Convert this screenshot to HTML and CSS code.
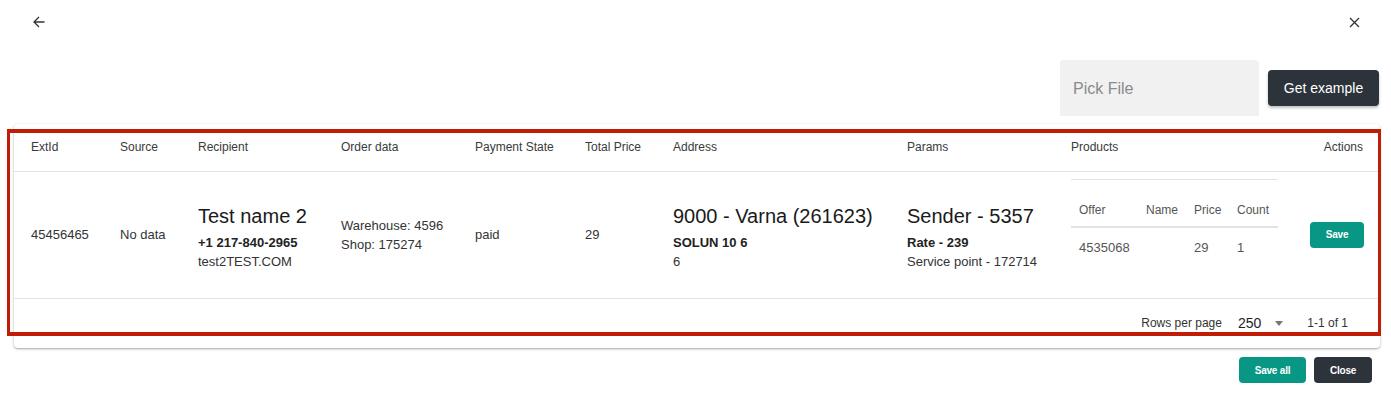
FILE: index.html
```html
<!DOCTYPE html>
<html>
<head>
<meta charset="utf-8">
<link rel="stylesheet" href="styles.css">
</head>
<body>
<div class="page">
  <div class="topbar">
    <button class="icon-btn" aria-label="Back">
      <svg width="12" height="12" viewBox="0 0 12 12"><path d="M11.5 6H1M6 1L1 6l5 5" fill="none" stroke="#333" stroke-width="1.3"/></svg>
    </button>
    <button class="icon-btn" aria-label="Close">
      <svg width="11" height="11" viewBox="0 0 11 11"><path d="M1 1l9 9M10 1l-9 9" fill="none" stroke="#333" stroke-width="1.3"/></svg>
    </button>
  </div>

  <div class="toolbar">
    <div class="file-input">Pick File</div>
    <button class="btn btn-dark btn-lg">Get example</button>
  </div>

  <div class="card">
    <table class="grid">
      <colgroup>
        <col class="c-ext"><col class="c-src"><col class="c-rec"><col class="c-ord"><col class="c-pay"><col class="c-tot"><col class="c-adr"><col class="c-par"><col class="c-prd"><col class="c-act">
      </colgroup>
      <thead>
        <tr>
          <th class="first">ExtId</th>
          <th>Source</th>
          <th>Recipient</th>
          <th>Order data</th>
          <th>Payment State</th>
          <th>Total Price</th>
          <th>Address</th>
          <th>Params</th>
          <th>Products</th>
          <th class="last">Actions</th>
        </tr>
      </thead>
      <tbody>
        <tr>
          <td class="first">45456465</td>
          <td>No data</td>
          <td class="stack">
            <div class="big">Test name 2</div>
            <div class="strong">+1 217-840-2965</div>
            <div class="line">test2TEST.COM</div>
          </td>
          <td>
            <div class="line">Warehouse: 4596</div>
            <div class="line">Shop: 175274</div>
          </td>
          <td>paid</td>
          <td>29</td>
          <td class="stack">
            <div class="big">9000 - Varna (261623)</div>
            <div class="strong">SOLUN 10 6</div>
            <div class="line">6</div>
          </td>
          <td class="stack">
            <div class="big">Sender - 5357</div>
            <div class="strong">Rate - 239</div>
            <div class="line">Service point - 172714</div>
          </td>
          <td class="products">
            <table class="sub">
              <colgroup><col class="s-off"><col class="s-name"><col class="s-price"><col class="s-cnt"></colgroup>
              <thead>
                <tr><th>Offer</th><th>Name</th><th>Price</th><th>Count</th></tr>
              </thead>
              <tbody>
                <tr><td>4535068</td><td></td><td>29</td><td>1</td></tr>
              </tbody>
            </table>
          </td>
          <td class="last"><button class="btn btn-teal btn-sm">Save</button></td>
        </tr>
      </tbody>
    </table>
    <div class="pagination">
      <span class="rpp">Rows per page</span>
      <span class="select"><span class="val">250</span><span class="caret"></span></span>
      <span class="range">1-1 of 1</span>
    </div>
  </div>

  <div class="footer-actions">
    <button class="btn btn-teal btn-sm">Save all</button>
    <button class="btn btn-dark btn-sm">Close</button>
  </div>

  <div class="highlight"></div>
</div>
</body>
</html>
```

FILE: styles.css
```css
* { box-sizing: border-box; }
html, body { margin: 0; padding: 0; background: #fff; }
body {
  font-family: "Liberation Sans", Arial, Helvetica, sans-serif;
  color: #333;
  width: 1391px;
  height: 411px;
  overflow: hidden;
}
.page { position: relative; height: 411px; }

.topbar {
  height: 44px;
  display: flex;
  align-items: center;
  justify-content: space-between;
  padding: 0 31px 0 33px;
}
.icon-btn {
  border: 0;
  background: none;
  padding: 0;
  display: flex;
  cursor: pointer;
}

.toolbar {
  margin-top: 16px;
  display: flex;
  justify-content: flex-end;
  align-items: center;
  gap: 9px;
  padding-right: 12px;
}
.file-input {
  width: 199px;
  height: 56px;
  background: #f1f1f1;
  border-radius: 4px 4px 0 0;
  padding: 2px 0 0 13px;
  display: flex;
  align-items: center;
  font-size: 16px;
  color: #8a8a8a;
}

.btn {
  border: 0;
  border-radius: 4px;
  color: #fff;
  font-family: inherit;
  cursor: pointer;
  display: inline-flex;
  align-items: center;
  justify-content: center;
}
.btn-dark { background: #2c333a; }
.btn-teal { background: #079784; }
.btn-lg {
  width: 111px;
  height: 36px;
  font-size: 14px;
  box-shadow: 0 2px 3px rgba(0,0,0,0.25);
}
.btn-sm {
  height: 26px;
  font-size: 10px;
  font-weight: bold;
  letter-spacing: -0.2px;
}

.card {
  margin: 8px 11px 0 14px;
  height: 224px;
  background: #fff;
  border-radius: 4px;
  box-shadow: 0 1px 3px rgba(0,0,0,0.28), 0 1px 1px rgba(0,0,0,0.1);
}

.grid {
  width: 100%;
  table-layout: fixed;
  border-collapse: collapse;
}
.c-ext { width: 106px; }
.c-src { width: 78px; }
.c-rec { width: 143px; }
.c-ord { width: 134px; }
.c-pay { width: 110px; }
.c-tot { width: 88px; }
.c-adr { width: 234px; }
.c-par { width: 164px; }
.c-prd { width: 219px; }
.c-act { width: 90px; }

.grid > thead > tr > th {
  height: 47px;
  font-size: 12px;
  font-weight: normal;
  color: #3a3a3a;
  text-align: left;
  padding: 0;
  border-bottom: 1px solid #e3e3e3;
  vertical-align: middle;
}
.grid > tbody > tr > td {
  height: 127px;
  font-size: 13px;
  color: #333;
  padding: 0;
  border-bottom: 1px solid #e3e3e3;
  vertical-align: middle;
}
.grid .first { padding-left: 17px; }
.grid th.last { text-align: right; padding-right: 17px; }
.grid td.last { text-align: right; padding-right: 16px; }

.grid > tbody > tr > td.stack {
  vertical-align: top;
  padding-top: 32px;
}
.big {
  font-size: 20px;
  line-height: 24px;
  color: #1a1a1a;
  margin-bottom: 5px;
  white-space: nowrap;
}
.strong {
  font-weight: bold;
  line-height: 19px;
  color: #222;
  white-space: nowrap;
}
.line { line-height: 19px; white-space: nowrap; }

.grid > tbody > tr > td.products {
  vertical-align: top;
  padding-top: 7px;
}
.sub {
  width: 207px;
  table-layout: fixed;
  border-collapse: collapse;
  border-top: 1px solid #e3e3e3;
}
.s-off { width: 67px; }
.s-name { width: 48px; }
.s-price { width: 43px; }
.s-cnt { width: 49px; }
.sub th {
  height: 48px;
  font-size: 12px;
  font-weight: normal;
  color: #555;
  text-align: left;
  padding: 0 0 9px 8px;
  vertical-align: bottom;
  border-bottom: 2px solid #e3e3e3;
  white-space: nowrap;
}
.sub td {
  height: 37px;
  font-size: 13px;
  color: #555;
  padding: 2px 0 0 8px;
  vertical-align: middle;
}
.grid td.last .btn { width: 54px; }

.pagination {
  height: 49px;
  display: flex;
  justify-content: flex-end;
  align-items: center;
  padding-right: 32px;
  font-size: 12px;
  color: #333;
}
.select {
  display: inline-flex;
  align-items: center;
  margin-left: 16px;
}
.select .val { font-size: 14px; color: #222; }
.caret {
  width: 0;
  height: 0;
  margin-left: 14px;
  border-left: 4px solid transparent;
  border-right: 4px solid transparent;
  border-top: 5px solid #777;
}
.range { margin-left: 24px; }

.footer-actions {
  margin-top: 9px;
  display: flex;
  justify-content: flex-end;
  gap: 8px;
  padding-right: 19px;
}
.footer-actions .btn-teal { width: 67px; }
.footer-actions .btn-dark { width: 58px; }

.highlight {
  position: absolute;
  left: 7px;
  top: 129px;
  width: 1374px;
  height: 207px;
  border: solid #c01c06;
  border-width: 4px 3px 4px 3px;
  pointer-events: none;
}
```
